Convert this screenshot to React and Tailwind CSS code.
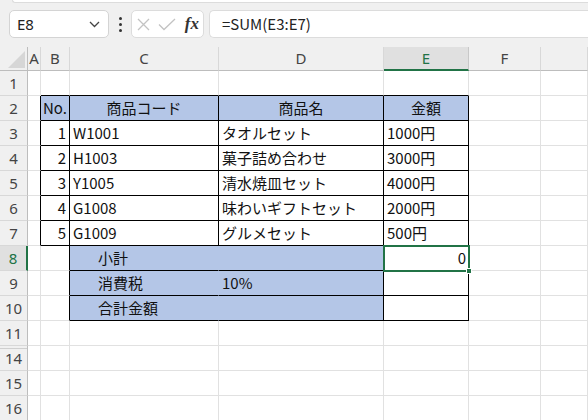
import React from "react";

const BLUE = "bg-[#b4c6e7]";
const cellFont = { fontFamily: '"Noto Sans CJK JP", "Noto Sans", sans-serif' };

const items = [
  { no: 1, code: "W1001", name: "タオルセット", price: "1000円" },
  { no: 2, code: "H1003", name: "菓子詰め合わせ", price: "3000円" },
  { no: 3, code: "Y1005", name: "清水焼皿セット", price: "4000円" },
  { no: 4, code: "G1008", name: "味わいギフトセット", price: "2000円" },
  { no: 5, code: "G1009", name: "グルメセット", price: "500円" },
];

const rowNums = [1, 2, 3, 4, 5, 6, 7, 8, 9, 10, 11, 14, 15, 16];
const cols = ["A", "B", "C", "D", "E", "F", "G"];

// returns [classes, content]
function cellInfo(r, c) {
  let right = "border-r-[#e1e1e1]";
  let bottom = "border-b-[#e1e1e1]";
  let bg = "bg-white";
  let align = "justify-start pl-[3px]";
  let text = "";
  const inTable = ["B", "C", "D", "E"].includes(c);

  if (r === 1 && inTable) bottom = "border-b-black";
  if (r >= 2 && r <= 7) {
    if (c === "A" || inTable) right = "border-r-black";
    if (inTable) bottom = "border-b-black";
    if (r === 2 && inTable) {
      bg = BLUE;
      align = "justify-center";
      text = { B: "No.", C: "商品コード", D: "商品名", E: "金額" }[c];
    }
    if (r >= 3) {
      const it = items[r - 3];
      if (c === "B") {
        align = "justify-end pr-[3px]";
        text = it.no;
      }
      if (c === "C") text = it.code;
      if (c === "D") text = it.name;
      if (c === "E") text = it.price;
    }
  }
  if (r >= 8 && r <= 10) {
    if (c === "B" || c === "D" || c === "E") right = "border-r-black";
    if (c === "C") right = "border-r-[#b4c6e7]";
    if (c === "C" || c === "D" || c === "E") bottom = "border-b-black";
    if (c === "C" || c === "D") bg = BLUE;
    if (c === "C") {
      align = "justify-start pl-[28px]";
      text = { 8: "小計", 9: "消費税", 10: "合計金額" }[r];
    }
    if (c === "D" && r === 9) text = "10%";
    if (c === "E" && r === 8) {
      align = "justify-end pr-[2px]";
      text = "0";
    }
  }
  return [`${right} ${bottom} ${bg} ${align}`, text];
}

function Toolbar() {
  return (
    <div className="relative h-[47px] bg-[#f0f0f0]">
      <div className="ml-[12px] h-[3px] bg-white border-b border-l border-[#dcdcdc] rounded-bl-[4px]" />
      <div className="flex items-center gap-0 pt-[7px]">
        <div className="ml-[9px] w-[100px] h-[28px] bg-white border border-[#d4d4d4] rounded-[5px] flex items-center justify-between pl-[7px] pr-[8px]">
          <span className="text-[15px] text-[#222]" style={{ fontFamily: '"Noto Sans", sans-serif' }}>E8</span>
          <svg width="11" height="7" viewBox="0 0 11 7">
            <path d="M1 1l4.5 4.5L10 1" fill="none" stroke="#444" strokeWidth="1.3" />
          </svg>
        </div>
        <div className="w-[22px] flex flex-col items-center gap-[3px]">
          <span className="w-[3px] h-[3px] rounded-full bg-[#333]" />
          <span className="w-[3px] h-[3px] rounded-full bg-[#333]" />
          <span className="w-[3px] h-[3px] rounded-full bg-[#333]" />
        </div>
        <div className="w-[73px] h-[28px] bg-white border border-[#dcdcdc] rounded-[5px] flex items-center pl-[5px] pr-[4px] justify-between">
          <svg width="13" height="13" viewBox="0 0 13 13">
            <path d="M1 1l11 11M12 1L1 12" stroke="#c3c3c3" strokeWidth="1.3" />
          </svg>
          <svg width="18" height="13" viewBox="0 0 18 13">
            <path d="M1 6.5l5 5L17 1" fill="none" stroke="#c3c3c3" strokeWidth="1.3" />
          </svg>
          <span
            className="text-[17px] italic font-bold text-[#333] leading-none pb-[2px]"
            style={{ fontFamily: '"Liberation Serif", serif' }}
          >
            fx
          </span>
        </div>
        <div className="ml-[5px] flex-1 h-[28px] bg-white border border-[#dcdcdc] rounded-l-[5px] border-r-0 flex items-center pl-[12px]">
          <span className="text-[15px] text-[#222]" style={cellFont}>=SUM(E3:E7)</span>
        </div>
      </div>
    </div>
  );
}

function Sheet() {
  const hdrFont = { fontFamily: '"Noto Sans", sans-serif' };
  return (
    <div className="grid grid-cols-[28px_13px_29px_149px_165px_85px_72px_1fr]">
      {/* column headers */}
      <div className="h-[24px] bg-[#f0f0f0] border-r border-b border-[#bdbdbd] relative">
        <svg className="absolute left-[8px] top-[4px]" width="17" height="17" viewBox="0 0 17 17">
          <path d="M17 0V17H0Z" fill="#d6d6d6" />
        </svg>
      </div>
      {cols.map((c) => (
        <div
          key={c}
          className={
            c === "E"
              ? "h-[24px] bg-[#e0e0e0] border-r border-r-[#c8c8c8] border-b-2 border-b-[#217346] flex items-center justify-center text-[15px] text-[#217346]"
              : "h-[24px] bg-[#f0f0f0] border-r border-r-[#d8d8d8] border-b border-b-[#bdbdbd] flex items-center justify-center text-[15px] text-[#444]"
          }
          style={hdrFont}
        >
          {c === "G" ? "" : c}
        </div>
      ))}
      {rowNums.map((r) => (
        <React.Fragment key={r}>
          <div
            className={
              r === 8
                ? "h-[25px] bg-[#e0e0e0] border-r-2 border-r-[#217346] border-b border-b-[#d8d8d8] flex items-center justify-center text-[15px] text-[#217346]"
                : r === 14
                ? "h-[25px] bg-[#f0f0f0] border-r border-r-[#bdbdbd] border-b border-b-[#d8d8d8] shadow-[inset_0_2px_0_#f0f0f0,inset_0_3px_0_#cfcfcf] flex items-center justify-center text-[15px] text-[#444]"
                : "h-[25px] bg-[#f0f0f0] border-r border-r-[#bdbdbd] border-b border-b-[#d8d8d8] flex items-center justify-center text-[15px] text-[#444]"
            }
            style={hdrFont}
          >
            {r}
          </div>
          {cols.map((c) => {
            const [cls, text] = cellInfo(r, c);
            const selected = r === 8 && c === "E";
            return (
              <div
                key={c}
                className={`h-[25px] border-r border-b flex items-center text-[15px] text-[#111] whitespace-nowrap overflow-visible ${cls} ${selected ? "relative" : ""}`}
                style={cellFont}
              >
                {text}
                {selected && (
                  <div className="absolute -left-[1px] -top-[1px] -right-[2px] -bottom-[2px] border-2 border-[#217346] z-10">
                    <div className="absolute -right-[4px] -bottom-[4px] w-[6px] h-[6px] bg-[#217346] border border-white" />
                  </div>
                )}
              </div>
            );
          })}
        </React.Fragment>
      ))}
    </div>
  );
}

export default function App() {
  return (
    <div className="w-[588px] h-[420px] overflow-hidden bg-white">
      <Toolbar />
      <Sheet />
    </div>
  );
}
